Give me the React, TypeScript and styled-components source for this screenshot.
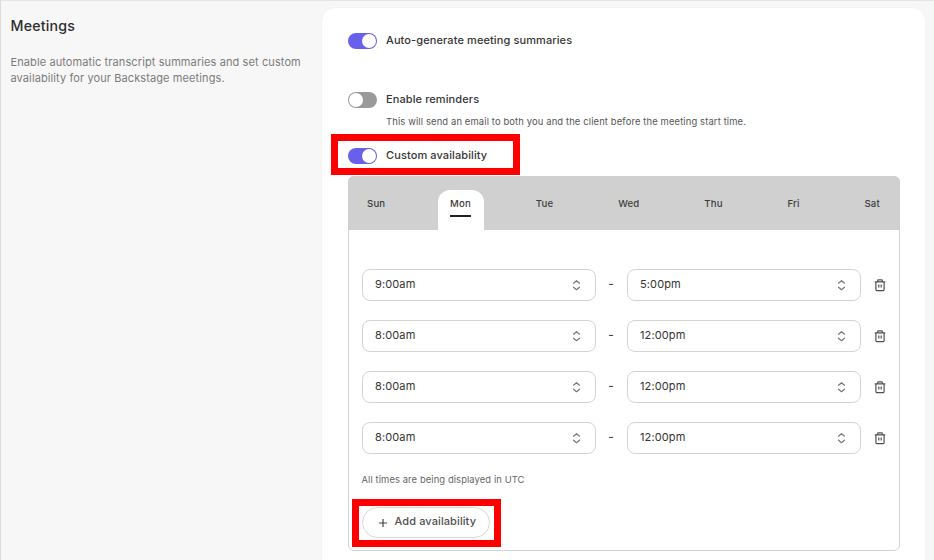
import React, { ReactNode, useState } from "react";
import styled, { createGlobalStyle } from "styled-components";

const GlobalStyle = createGlobalStyle`
  * {
    box-sizing: border-box;
  }

  body {
    margin: 0;
    overflow: hidden;
    background-color: #f7f7f7;
    font-family: Inter, "Liberation Sans", sans-serif;
    color: #333;
  }

  button {
    font-family: inherit;
    cursor: pointer;
  }
`;

const Page = styled.main`
  display: flex;
  width: 934px;
  height: 560px;
  border-top: 1px solid #e4e4e4;
  border-left: 1px solid #dcdcdc;
  overflow: hidden;
`;

const Sidebar = styled.aside`
  width: 320px;
  flex-shrink: 0;
  padding: 16px 0 0 9.5px;
`;

const Title = styled.h2`
  margin: 0;
  font-size: 14.2px;
  line-height: 18px;
  font-weight: 500;
  letter-spacing: 0.2px;
  color: #2e2e2e;
`;

const Description = styled.p`
  margin: 19px 0 0;
  font-size: 11px;
  line-height: 16px;
  letter-spacing: 0.1px;
  color: #7b7b7b;
  white-space: nowrap;
`;

const Panel = styled.section`
  width: 605px;
  height: 620px;
  flex-shrink: 0;
  margin-top: 6px;
  padding: 25px 25px 0 25.5px;
  border: 1px solid #f4f4f4;
  border-radius: 14px;
  background-color: #fff;
`;

const SettingRow = styled.div<{ $gap?: number }>`
  position: relative;
  display: flex;
  align-items: center;
  height: 16px;
  margin-top: ${({ $gap = 0 }) => $gap}px;
`;

const SettingLabel = styled.span`
  margin-left: 9.5px;
  padding-bottom: 2px;
  font-size: 11px;
  line-height: 14px;
  font-weight: 500;
  letter-spacing: 0.1px;
  color: #363636;
  white-space: nowrap;
`;

const Hint = styled.p`
  margin: 7px 0 0 38.5px;
  font-size: 9.4px;
  line-height: 14px;
  letter-spacing: 0.14px;
  color: #555;
  white-space: nowrap;
`;

const Switch = styled.button<{ $on: boolean }>`
  display: flex;
  align-items: center;
  justify-content: ${({ $on }) => ($on ? "flex-end" : "flex-start")};
  width: 29px;
  height: 16px;
  padding: 0 1px;
  border: none;
  border-radius: 8px;
  background-color: ${({ $on }) => ($on ? "#6860ea" : "#9b9a9a")};
`;

const Knob = styled.span`
  width: 14px;
  height: 14px;
  border-radius: 50%;
  background-color: #fff;
`;

// 강조 표시용 빨간 테두리
const Highlight = styled.div<{ $top: number; $left: number; $width: number; $height: number }>`
  position: absolute;
  top: ${({ $top }) => $top}px;
  left: ${({ $left }) => $left}px;
  width: ${({ $width }) => $width}px;
  height: ${({ $height }) => $height}px;
  border: 7px solid #fe0000;
  pointer-events: none;
`;

const Schedule = styled.div`
  width: 552px;
  height: 375px;
  margin-top: 12px;
  border: 1px solid #d2d2d2;
  border-radius: 6px;
`;

const DayTabs = styled.div`
  display: flex;
  justify-content: space-between;
  height: 54px;
  margin: -1px -1px 0;
  padding: 14px 7px 0;
  border-radius: 6px 6px 0 0;
  background-color: #d0d0d0;
`;

const DayTab = styled.button<{ $active: boolean }>`
  display: flex;
  flex-direction: column;
  align-items: center;
  height: 40px;
  padding: 7px 12.5px 0;
  border: none;
  border-radius: 12px 12px 0 0;
  background-color: ${({ $active }) => ($active ? "#fff" : "transparent")};
  font-size: 9.6px;
  line-height: 14px;
  font-weight: 500;
  letter-spacing: 0.2px;
  color: #3c3c3c;

  &::after {
    content: "";
    width: 100%;
    height: 2px;
    margin-top: 4px;
    background-color: ${({ $active }) => ($active ? "#222" : "transparent")};
  }
`;

const ScheduleBody = styled.div`
  padding: 39px 12px 0 13px;
`;

const Slots = styled.div`
  display: flex;
  flex-direction: column;
  gap: 19.1px;
`;

const SlotRow = styled.div`
  display: flex;
  align-items: center;
  height: 32px;
`;

const TimeSelect = styled.button`
  display: flex;
  align-items: center;
  justify-content: space-between;
  width: 234px;
  height: 32px;
  padding: 0 14px 0 12.5px;
  border: 1px solid #d3d3d3;
  border-radius: 8px;
  background-color: #fff;
  font-size: 11px;
  letter-spacing: 0.12px;
  color: #333;

  span {
    padding-bottom: 2px;
  }
`;

const Dash = styled.span`
  width: 31px;
  padding-bottom: 3px;
  text-align: center;
  font-size: 12px;
  font-weight: 500;
  color: #444;
`;

const IconButton = styled.button`
  display: flex;
  margin-left: 13px;
  padding: 0;
  border: none;
  background: none;
  color: #505050;
`;

const TimezoneNote = styled.p`
  margin: 19px 0 0;
  font-size: 9.4px;
  line-height: 14px;
  letter-spacing: 0.1px;
  color: #666;
`;

const AddArea = styled.div`
  position: relative;
  margin-top: 20px;
`;

const AddButton = styled.button`
  display: flex;
  align-items: center;
  width: 128px;
  height: 31px;
  padding: 0 0 0 15px;
  border: 1px solid #d6d9d6;
  border-radius: 16px;
  background-color: #fff;
  font-size: 11px;
  font-weight: 500;
  letter-spacing: 0.1px;
  color: #505050;
  white-space: nowrap;

  span {
    margin-left: 7px;
    padding-bottom: 3px;
  }
`;

const ChevronsIcon = () => (
  <svg width="9" height="12" viewBox="0 0 9 12" fill="none" stroke="#777" strokeWidth="1.2">
    <path d="M1.5 4.2 4.5 1.7l3 2.5M1.5 8.2l3 2.5 3-2.5" strokeLinecap="round" strokeLinejoin="round" />
  </svg>
);

const TrashIcon = () => (
  <svg width="12" height="13" viewBox="0 0 12 13" fill="none" stroke="currentColor" strokeWidth="1.2">
    <path d="M.7 2.9h10.6M1.9 2.9v7.6a1.2 1.2 0 0 0 1.2 1.2h5.8a1.2 1.2 0 0 0 1.2-1.2V2.9M3.7 2.9V1.6a.8.8 0 0 1 .8-.8h3a.8.8 0 0 1 .8.8v1.3" />
    <path d="M4.8 5.6v3M7.2 5.6v3" />
  </svg>
);

const PlusIcon = () => (
  <svg width="10" height="10" viewBox="0 0 10 10" stroke="#444" strokeWidth="1.2">
    <path d="M5 1v8M1 5h8" />
  </svg>
);

interface SettingProps {
  label: string;
  defaultOn?: boolean;
  gap?: number;
  children?: ReactNode;
}

const Setting: React.FC<SettingProps> = ({ label, defaultOn = false, gap, children }) => {
  const [on, setOn] = useState(defaultOn);

  return (
    <SettingRow $gap={gap}>
      <Switch $on={on} role="switch" aria-checked={on} aria-label={label} onClick={() => setOn(!on)}>
        <Knob />
      </Switch>
      <SettingLabel>{label}</SettingLabel>
      {children}
    </SettingRow>
  );
};

const days = ["Sun", "Mon", "Tue", "Wed", "Thu", "Fri", "Sat"];

const initialSlots = [
  { from: "9:00am", to: "5:00pm" },
  { from: "8:00am", to: "12:00pm" },
  { from: "8:00am", to: "12:00pm" },
  { from: "8:00am", to: "12:00pm" },
];

const App: React.FC = () => {
  const [activeDay, setActiveDay] = useState("Mon");
  const [slots, setSlots] = useState(initialSlots);

  const addSlot = () => setSlots([...slots, { from: "8:00am", to: "12:00pm" }]);
  const removeSlot = (index: number) => setSlots(slots.filter((_, i) => i !== index));

  return (
    <>
      <GlobalStyle />
      <Page>
        <Sidebar>
          <Title>Meetings</Title>
          <Description>
            Enable automatic transcript summaries and set custom
            <br />
            availability for your Backstage meetings.
          </Description>
        </Sidebar>
        <Panel>
          <Setting label="Auto-generate meeting summaries" defaultOn />
          <Setting label="Enable reminders" gap={43} />
          <Hint>This will send an email to both you and the client before the meeting start time.</Hint>
          <Setting label="Custom availability" defaultOn gap={19}>
            <Highlight $top={-14} $left={-16.5} $width={189} $height={41} />
          </Setting>
          <Schedule>
            <DayTabs>
              {days.map((day) => (
                <DayTab key={day} $active={day === activeDay} onClick={() => setActiveDay(day)}>
                  {day}
                </DayTab>
              ))}
            </DayTabs>
            <ScheduleBody>
              <Slots>
                {slots.map((slot, index) => (
                  <SlotRow key={index}>
                    <TimeSelect>
                      <span>{slot.from}</span>
                      <ChevronsIcon />
                    </TimeSelect>
                    <Dash>-</Dash>
                    <TimeSelect>
                      <span>{slot.to}</span>
                      <ChevronsIcon />
                    </TimeSelect>
                    <IconButton aria-label="Delete" onClick={() => removeSlot(index)}>
                      <TrashIcon />
                    </IconButton>
                  </SlotRow>
                ))}
              </Slots>
              <TimezoneNote>All times are being displayed in UTC</TimezoneNote>
              <AddArea>
                <AddButton onClick={addSlot}>
                  <PlusIcon />
                  <span>Add availability</span>
                </AddButton>
                <Highlight $top={-8} $left={-9.5} $width={149} $height={48} />
              </AddArea>
            </ScheduleBody>
          </Schedule>
        </Panel>
      </Page>
    </>
  );
};

export default App;
